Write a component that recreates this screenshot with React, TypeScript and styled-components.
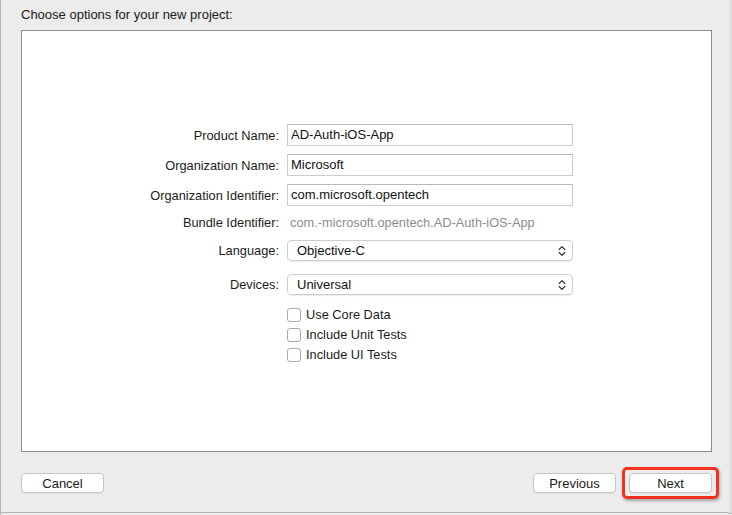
import styled, { createGlobalStyle } from 'styled-components'

const GlobalStyle = createGlobalStyle`
  html, body {
    margin: 0;
    padding: 0;
    background: #ececec;
    font-family: 'Liberation Sans', Arial, sans-serif;
  }
`

interface Field {
  label: string
  value: string
}

const textFields: Field[] = [
  { label: 'Product Name:', value: 'AD-Auth-iOS-App' },
  { label: 'Organization Name:', value: 'Microsoft' },
  { label: 'Organization Identifier:', value: 'com.microsoft.opentech' }
]

const checks = ['Use Core Data', 'Include Unit Tests', 'Include UI Tests']

function Chevrons () {
  return (
    <svg width='8' height='12' viewBox='0 0 8 12'>
      <path d='M1.2 4.5 L4 1.6 L6.8 4.5' fill='none' stroke='#333' strokeWidth='1.2' strokeLinecap='round' strokeLinejoin='round' />
      <path d='M1.2 7.5 L4 10.4 L6.8 7.5' fill='none' stroke='#333' strokeWidth='1.2' strokeLinecap='round' strokeLinejoin='round' />
    </svg>
  )
}

export default function App () {
  return (
    <>
      <GlobalStyle />
      <Window>
        <Sheet>
          <Heading>Choose options for your new project:</Heading>
          <Panel>
            <Form>
              {textFields.map((field, i) => (
                <Row key={field.label} $gap={i === 0 ? 0 : 8} $height={22}>
                  <Label>{field.label}</Label>
                  <TextBox>{field.value}</TextBox>
                </Row>
              ))}
              <Row $gap={8} $height={16}>
                <Label>Bundle Identifier:</Label>
                <Muted>com.-microsoft.opentech.AD-Auth-iOS-App</Muted>
              </Row>
              <Row $gap={10} $height={21}>
                <Label>Language:</Label>
                <Popup>Objective-C<Chevrons /></Popup>
              </Row>
              <Row $gap={13} $height={21}>
                <Label>Devices:</Label>
                <Popup>Universal<Chevrons /></Popup>
              </Row>
              {checks.map((c, i) => (
                <Row key={c} $gap={i === 0 ? 12 : 6} $height={14}>
                  <span />
                  <CheckRow>
                    <Box />
                    <span>{c}</span>
                  </CheckRow>
                </Row>
              ))}
            </Form>
          </Panel>
          <Footer>
            <Button>Cancel</Button>
            <Spacer />
            <Button>Previous</Button>
            <Highlight>
              <Button>Next</Button>
            </Highlight>
          </Footer>
        </Sheet>
        <Edge />
      </Window>
    </>
  )
}

const Window = styled.div`
  width: 732px;
  height: 515px;
  display: flex;
  box-sizing: border-box;
  border-left: 1px solid #b8b8b8;
  background: #ececec;
  overflow: hidden;
`

const Sheet = styled.div`
  width: 728px;
  height: 513px;
  box-sizing: border-box;
  border-bottom: 1px solid #b4b4b4;
  display: flex;
  flex-direction: column;
  padding: 0 0 0 20px;
`

const Edge = styled.div`
  width: 3px;
  height: 513px;
  background: linear-gradient(to right, #e6e6e6, #dedede);
  border-bottom: 1px solid #b4b4b4;
`

const Heading = styled.div`
  height: 30px;
  line-height: 30px;
  font-size: 13px;
  color: #1a1a1a;
`

const Panel = styled.div`
  width: 691px;
  height: 422px;
  box-sizing: border-box;
  border: 1px solid #8d8d8d;
  background: #fff;
  padding-top: 93px;
`

const Form = styled.div`
  display: flex;
  flex-direction: column;
`

const Row = styled.div<{ $gap: number, $height: number }>`
  display: grid;
  grid-template-columns: 257px 286px;
  column-gap: 8px;
  align-items: center;
  margin-top: ${p => p.$gap}px;
  height: ${p => p.$height}px;
`

const Label = styled.div`
  text-align: right;
  font-size: 12.8px;
  color: #1c1c1c;
  white-space: nowrap;
`

const TextBox = styled.div`
  height: 22px;
  box-sizing: border-box;
  border: 1px solid #cbcbcb;
  border-top-color: #b9b9b9;
  padding: 0 3px;
  font-size: 13px;
  line-height: 20px;
  color: #111;
`

const Muted = styled.div`
  font-size: 12.8px;
  color: #8c8c8c;
  padding-left: 3px;
  white-space: nowrap;
`

const Popup = styled.div`
  height: 21px;
  box-sizing: border-box;
  border: 1px solid #cdcdcd;
  border-radius: 4px;
  box-shadow: 0 1px 1px rgba(0, 0, 0, 0.08);
  padding: 0 6px 0 9px;
  display: flex;
  align-items: center;
  justify-content: space-between;
  font-size: 13px;
  color: #111;
`

const CheckRow = styled.div`
  display: flex;
  align-items: center;
  gap: 5px;
  font-size: 12.8px;
  color: #1c1c1c;
`

const Box = styled.div`
  width: 14px;
  height: 14px;
  box-sizing: border-box;
  border: 1px solid #a9a9a9;
  border-radius: 3px;
  background: #fff;
`

const Footer = styled.div`
  display: flex;
  align-items: center;
  margin-top: 15px;
  width: 691px;
`

const Spacer = styled.div`
  flex: 1;
`

const Button = styled.button`
  width: 83px;
  height: 20px;
  box-sizing: border-box;
  border: 1px solid #c6c6c6;
  border-radius: 4px;
  background: #fff;
  box-shadow: 0 1px 1px rgba(0, 0, 0, 0.06);
  font-family: 'Liberation Sans', Arial, sans-serif;
  font-size: 13px;
  color: #1a1a1a;
  padding: 0;
  cursor: pointer;
`

const Highlight = styled.div`
  margin-left: 6px;
  margin-right: -7px;
  padding: 3px 4px;
  border: 3px solid #f0321e;
  border-radius: 5px;
  box-shadow: 1px 2px 3px rgba(0, 0, 0, 0.3);
  display: flex;
`
